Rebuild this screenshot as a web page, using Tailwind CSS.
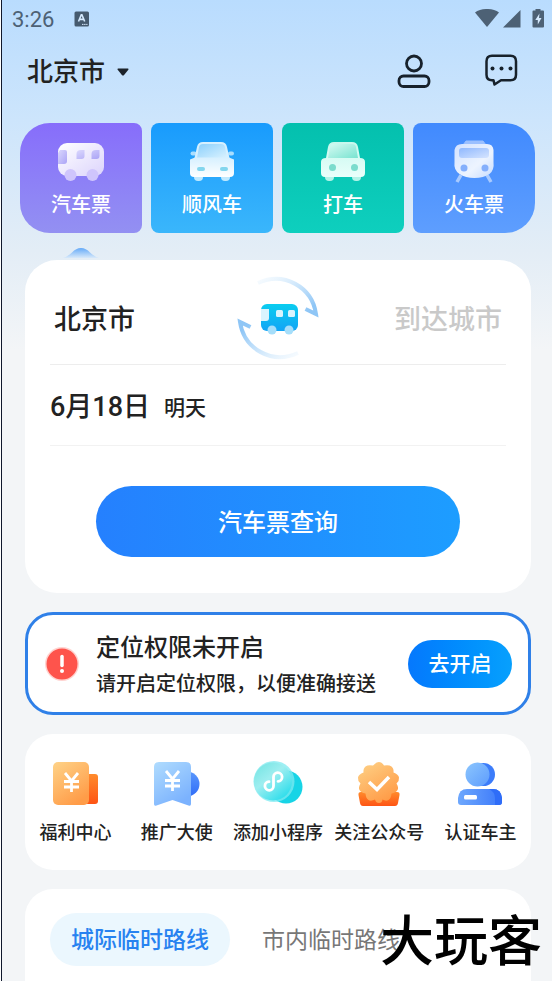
<!DOCTYPE html>
<html lang="zh-CN">
<head>
  <meta charset="UTF-8">
  <meta name="viewport" content="width=device-width, initial-scale=1.0">
  <title>汽车票查询</title>
  <script src="https://cdn.jsdelivr.net/npm/@tailwindcss/browser@4"></script>
</head>
<body class="h-screen overflow-hidden bg-white pl-px font-['Roboto','Noto_Sans_CJK_SC',sans-serif] font-medium text-[#222]">
  <div class="flex min-h-screen flex-col border-l border-[#10182c] bg-[#f3f4f7] bg-[linear-gradient(180deg,#b9dcfe_0px,#cde5fc_120px,#e3edf6_250px,#f3f5f7_350px)] bg-no-repeat">

    <!-- Status bar -->
    <div class="flex h-[38px] items-center justify-between pl-[10px] pr-2 text-[#4d6175]">
      <div class="flex items-center gap-5">
        <span class="text-[22px] font-normal">3:26</span>
        <svg class="h-4 w-4" viewBox="0 0 16 16">
          <rect x="0.5" y="0.5" width="14.500" height="15" rx="1.500" fill="#465a6e"/>
          <path d="M4.500 10.500 7.300 3.700h.6l2.800 6.800M5.500 8.400h4.200" fill="none" stroke="#d5e9fd" stroke-width="1.600"/>
          <path d="M8 13.400h5.500" stroke="#d5e9fd" stroke-width="1" stroke-dasharray="1.500 .6"/>
        </svg>
      </div>
      <svg class="h-5 w-[69px]" viewBox="0 0 69 20" fill="#4d6175">
        <path d="M0 3.500C6-1.200 18-1.200 24 3.500L12 18Z"/>
        <path d="M28 18.500 45.500 1v17.500Z"/>
        <path d="M60.500 0h5v1.500h2.500q1 0 1 1v15q0 1-1 1h-9.500q-1 0-1-1v-15q0-1 1-1h2Z"/>
        <path d="M64.500 4.500 60.300 11h2.500v4.500L66.500 9h-2.500Z" fill="#d5e9fd"/>
      </svg>
    </div>

    <!-- Header -->
    <header class="flex h-[66px] items-center justify-between pl-[25px] pr-[34px]">
      <button class="flex items-center gap-3 pt-0.5 text-[26px] leading-9">
        北京市
        <svg class="h-2 w-3" viewBox="0 0 12 8"><path d="M1 .5h10q1 .3.3 1.300L6.900 7.200q-.9.8-1.800 0L.7 1.800Q0 .8 1 .5Z" fill="#1c232b"/></svg>
      </button>
      <div class="flex items-center gap-[53px]">
        <button aria-label="我的">
          <svg class="h-[34px] w-[34px]" viewBox="0 0 34 34" fill="none" stroke="#17212b" stroke-width="2.800">
            <circle cx="17" cy="9.500" r="7.500"/>
            <rect x="2" y="22" width="30" height="10.500" rx="4.500"/>
          </svg>
        </button>
        <button aria-label="消息">
          <svg class="h-[34px] w-[34px]" viewBox="0 0 34 34" fill="none" stroke="#17212b" stroke-width="2.500" stroke-linejoin="round">
            <path d="M8 1.800h18.500q5.500 0 5.500 5.500v13.500q0 5.500-5.500 5.500H17L10.500 30.500 9.500 26.300H8q-5.500 0-5.500-5.500V7.300q0-5.500 5.500-5.500Z"/>
            <g fill="#17212b" stroke="none"><circle cx="8.500" cy="14.500" r="2"/><circle cx="17.500" cy="14.500" r="2"/><circle cx="26.500" cy="14.500" r="2"/></g>
          </svg>
        </button>
      </div>
    </header>

    <!-- Ticket types -->
    <nav class="mt-[19px] grid grid-cols-4 gap-[9px] pl-[18px] pr-[17px] text-[20px] leading-8 text-white">
      <a href="#" class="flex h-[110px] flex-col items-center rounded-l-[30px] rounded-r-lg bg-linear-to-b from-[#876dfb] to-[#9390f2] pt-4">
        <svg class="h-[50px] w-[50px]" viewBox="0 0 50 50">
          <defs>
            <linearGradient id="busBody" x2="1" y2="1"><stop stop-color="#fff"/><stop offset="1" stop-color="#dcd4fc"/></linearGradient>
            <linearGradient id="busGlass" x2="1" y2="1"><stop stop-color="#dbd8fd"/><stop offset="1" stop-color="#aba4f6"/></linearGradient>
          </defs>
          <rect x="2" y="4" width="46" height="33" rx="9" fill="url(#busBody)"/>
          <path d="M4 11h5q2 0 2 2v9q0 3-3 3H2V14Z" fill="url(#busGlass)"/>
          <path d="M25 11h3.500v6q0 3-3 3h-5v-5q0-4 4.500-4ZM40 11h3.500v6q0 3-3 3h-5v-5q0-4 4.500-4Z" fill="url(#busGlass)"/>
          <circle cx="14.500" cy="36" r="6" fill="#cfc5fc"/><circle cx="36.500" cy="36" r="6" fill="#cfc5fc"/>
        </svg>
        汽车票
      </a>
      <a href="#" class="flex h-[110px] flex-col items-center rounded-lg bg-linear-to-b from-[#189bfd] to-[#3ab6fb] pt-4">
        <svg class="h-[50px] w-[50px]" viewBox="0 0 50 50">
          <defs>
            <linearGradient id="carBody" x2="0" y2="1"><stop stop-color="#d6f0ff"/><stop offset="1" stop-color="#fff"/></linearGradient>
            <linearGradient id="carGlass" x2="1" y2="1"><stop stop-color="#8cd0fc"/><stop offset="1" stop-color="#d9f2ff"/></linearGradient>
          </defs>
          <rect x="7" y="34" width="9" height="8" rx="4" fill="#bfe9fe"/><rect x="34" y="34" width="9" height="8" rx="4" fill="#bfe9fe"/>
          <rect x="3.500" y="12.500" width="6" height="4" rx="2" fill="#a9defe"/><rect x="41" y="12.500" width="6" height="4" rx="2" fill="#a9defe"/>
          <path d="M16 3h18q5 0 6 5l2.500 11h-35L10 8q1-5 6-5Z" fill="#d6f0ff"/>
          <path d="M16 5h18q3.500 0 4 3l2 11H10l2-11q.5-3 4-3Z" fill="url(#carGlass)"/>
          <path d="M8 18.500h34l5 2V34q0 4-4 4H7q-4 0-4-4V20.500Z" fill="url(#carBody)"/>
          <rect x="10" y="28" width="8" height="4" rx="2" fill="#83d6ee"/><rect x="33" y="28" width="8" height="4" rx="2" fill="#83d6ee"/>
        </svg>
        顺风车
      </a>
      <a href="#" class="flex h-[110px] flex-col items-center rounded-lg bg-linear-to-b from-[#04c0ae] to-[#0ecfbe] pt-4">
        <svg class="h-[50px] w-[50px]" viewBox="0 0 50 50">
          <defs>
            <linearGradient id="taxiBody" x2="0" y2="1"><stop stop-color="#c6f8ed"/><stop offset="1" stop-color="#e9fffb"/></linearGradient>
            <linearGradient id="taxiGlass" x2="1" y2="1"><stop stop-color="#d6fbf3"/><stop offset="1" stop-color="#78e3d0"/></linearGradient>
          </defs>
          <rect x="7" y="34" width="9" height="8" rx="4" fill="#b3f3e8"/><rect x="34" y="34" width="9" height="8" rx="4" fill="#b3f3e8"/>
          <path d="M16 3h18q5 0 6 5l2 11q5 0 5 4v11q0 4-4 4H7q-4 0-4-4V23q0-4 5-4L10 8q1-5 6-5Z" fill="url(#taxiBody)"/>
          <path d="M16 5h18q3.500 0 4 3l2 11H10l2-11q.5-3 4-3Z" fill="url(#taxiGlass)"/>
          <circle cx="14.500" cy="28.500" r="3.500" fill="#7bdccd"/><circle cx="36.500" cy="28.500" r="3.500" fill="#7bdccd"/>
        </svg>
        打车
      </a>
      <a href="#" class="flex h-[110px] flex-col items-center rounded-l-lg rounded-r-[30px] bg-linear-to-b from-[#418afe] to-[#5e9efe] pt-4">
        <svg class="h-[50px] w-[50px]" viewBox="0 0 50 50">
          <defs>
            <linearGradient id="trainBody" x2="1" y2="1"><stop stop-color="#d2e2ff"/><stop offset=".6" stop-color="#edf4ff"/><stop offset="1" stop-color="#c5dbff"/></linearGradient>
            <linearGradient id="trainGlass" x2="1" y2="1"><stop stop-color="#8fb8fe"/><stop offset="1" stop-color="#d5e4ff"/></linearGradient>
          </defs>
          <path d="m12 36-4 7M38 36l4 7" stroke="#a8caff" stroke-width="3.500"/>
          <path d="M17 2h17l3 4H14Z" fill="#9bc0ff" stroke="#9bc0ff" stroke-linejoin="round"/>
          <path d="M13 5h25q6 0 6.500 6v12q1 8-4 12-6 4-15 4t-15-4q-6-4-5-12V11q1-6 7.500-6Z" fill="url(#trainBody)"/>
          <rect x="10" y="9" width="30" height="10" rx="3" fill="url(#trainGlass)"/>
          <circle cx="15" cy="29" r="3.500" fill="#84affc"/><circle cx="36" cy="29" r="3.500" fill="#84affc"/>
        </svg>
        火车票
      </a>
    </nav>

    <!-- Selected type marker -->
    <div class="flex h-[27px] items-end pb-0.5 pl-[61px]">
      <svg class="h-2.5 w-9" viewBox="0 0 36 10">
        <defs><linearGradient id="marker" x2="0" y2="1"><stop stop-color="#65aaf8"/><stop offset="1" stop-color="#d8e9fa"/></linearGradient></defs>
        <path d="M0 10Q4 9 9 4.500 13 0 18 0T27 4.500Q32 9 36 10Z" fill="url(#marker)"/>
      </svg>
    </div>

    <main class="flex flex-1 flex-col gap-[19px] pl-[23px] pr-[21px]">
      <!-- Search card -->
      <section class="rounded-[32px] bg-white px-[25px] pb-9">
        <div class="grid h-[105px] grid-cols-[1fr_auto_1fr] items-center border-b border-[#ededed] px-1 pt-3 text-[27px]">
          <button class="pt-1 text-left">北京市</button>
          <button aria-label="交换城市">
            <svg class="h-21 w-21" viewBox="0 0 84 84">
              <defs>
                <linearGradient id="arcTop" x1="0" y1="0" x2="1" y2=".7"><stop stop-color="#d5ebfc" stop-opacity=".2"/><stop offset="1" stop-color="#8fc6f6"/></linearGradient>
                <linearGradient id="arcBottom" x1="1" y1="1" x2="0" y2=".3"><stop stop-color="#d5ebfc" stop-opacity=".2"/><stop offset="1" stop-color="#8fc6f6"/></linearGradient>
                <linearGradient id="miniBus" x2="0" y2="1"><stop stop-color="#0acdf0"/><stop offset="1" stop-color="#12a4f5"/></linearGradient>
              </defs>
              <path d="M22 7C48-5 76 11 80 38L69.500 33" fill="none" stroke="url(#arcTop)" stroke-width="4"/>
              <path d="M62 77C36 89 8 73 4 46L14.500 51" fill="none" stroke="url(#arcBottom)" stroke-width="4"/>
              <rect x="25" y="28" width="37" height="27" rx="6" fill="url(#miniBus)"/>
              <path d="M25 33h8v9q0 3-3 3h-5Z" fill="#d9f4fe"/>
              <rect x="40" y="34" width="7" height="7" rx="1.500" fill="#d9f4fe"/><rect x="52" y="34" width="7" height="7" rx="1.500" fill="#d9f4fe"/>
              <circle cx="36" cy="54" r="4.500" fill="#a6defa"/><circle cx="53" cy="54" r="4.500" fill="#a6defa"/>
            </svg>
          </button>
          <button class="pt-1 text-right text-[#c9c9c9]">到达城市</button>
        </div>
        <button class="flex h-[81px] w-full items-center gap-3.5 border-b border-[#f2f2f2] pt-1 text-[27px]">
          6月18日 <span class="pt-1 text-[21px]">明天</span>
        </button>
        <div class="px-[46px] pt-10">
          <button class="h-[71px] w-full rounded-full bg-linear-to-r from-[#2580fe] to-[#1d9dff] pt-0.5 text-[24px] text-white">汽车票查询</button>
        </div>
      </section>

      <!-- Location permission -->
      <section class="flex h-[103px] items-center rounded-[28px] border-3 border-[#2f80e8] bg-white pl-4 pr-4">
        <svg class="mr-4 h-9 w-9 shrink-0" viewBox="0 0 36 36">
          <circle cx="18" cy="18" r="17" fill="#ffd3d0"/><circle cx="18" cy="18" r="15.500" fill="#fe544c"/>
          <path d="M18 10.500v9" stroke="#fff" stroke-width="3.500" stroke-linecap="round"/><circle cx="18" cy="25" r="2" fill="#fff"/>
        </svg>
        <div class="flex-1 pt-1 whitespace-nowrap">
          <h2 class="text-[24px] leading-9">定位权限未开启</h2>
          <p class="text-[20px] leading-9">请开启定位权限，以便准确接送</p>
        </div>
        <button class="h-12 w-[104px] shrink-0 rounded-full bg-linear-to-r from-[#0678fd] to-[#08a0fd] pt-0.5 text-[21px] text-white">去开启</button>
      </section>

      <!-- Services -->
      <section class="grid h-[136px] grid-cols-5 rounded-[28px] bg-white pt-[25px] text-center text-[18px] leading-8 whitespace-nowrap">
        <a href="#" class="flex flex-col items-center gap-2">
          <svg class="h-[50px] w-[50px]" viewBox="0 0 50 50">
            <defs>
              <linearGradient id="gold" x2=".6" y2="1"><stop stop-color="#fed388"/><stop offset="1" stop-color="#ff9c48"/></linearGradient>
              <linearGradient id="orange" x2="0" y2="1"><stop stop-color="#ff8b2c"/><stop offset="1" stop-color="#fe5414"/></linearGradient>
            </defs>
            <rect x="27" y="15" width="20" height="30" rx="3" fill="url(#orange)"/>
            <rect x="2" y="3" width="36" height="43" rx="5" fill="url(#gold)"/>
            <path d="m14 14 6.500 8 6.500-8M20.500 22v11M13 22.500h15M13 28h15" fill="none" stroke="#fff" stroke-width="2.800"/>
          </svg>
          福利中心
        </a>
        <a href="#" class="flex flex-col items-center gap-2">
          <svg class="h-[50px] w-[50px]" viewBox="0 0 50 50">
            <defs>
              <linearGradient id="ribbon" x2=".6" y2="1"><stop stop-color="#b0dcfe"/><stop offset="1" stop-color="#7bb2fe"/></linearGradient>
              <linearGradient id="coin" x2="0" y2="1"><stop stop-color="#5a97fc"/><stop offset="1" stop-color="#2f6df8"/></linearGradient>
            </defs>
            <circle cx="35" cy="25" r="12.500" fill="url(#coin)"/>
            <path d="M7 3h27q5 0 5 5v37q0 2.500-2.500 1.500L20.500 41 4.500 46.500Q2 47.500 2 45V8q0-5 5-5Z" fill="url(#ribbon)"/>
            <path d="m14 12 6.500 8 6.500-8M20.500 20v12M13 21.500h15M13 27h15" fill="none" stroke="#fff" stroke-width="2.800"/>
          </svg>
          推广大使
        </a>
        <a href="#" class="flex flex-col items-center gap-2">
          <svg class="h-[50px] w-[50px]" viewBox="0 0 50 50">
            <defs>
              <linearGradient id="mint" x2=".8" y2="1"><stop stop-color="#6fe3e1"/><stop offset=".45" stop-color="#9eeef0"/><stop offset="1" stop-color="#25dceb"/></linearGradient>
            </defs>
            <circle cx="33" cy="28" r="16.500" fill="#17d4e6"/>
            <circle cx="21" cy="22.500" r="20.500" fill="#7eeaf0" opacity=".75"/>
            <circle cx="20" cy="22.500" r="19" fill="url(#mint)"/>
            <path d="M20.500 18.500v8.500a4.300 4.300 0 1 1-4.500-4.300M20.500 26v-8a4.300 4.300 0 1 1 4.500 4.300" fill="none" stroke="#fff" stroke-width="2.800" stroke-linecap="round"/>
          </svg>
          添加小程序
        </a>
        <a href="#" class="flex flex-col items-center gap-2">
          <svg class="h-[50px] w-[50px]" viewBox="0 0 50 50">
            <path d="M7 33h36q3 0 2.500 3l-1.500 8q-.5 3-3 3H9q-2.500 0-3-3l-1.500-8Q4 33 7 33Z" fill="url(#orange)"/>
            <path d="M25 3q3 0 5 3.500 5-1 7.500 1t2 6q5 2 5.500 5t-2.500 6q2.500 4 1 6.500t-6 3.500q-.5 5-3 6.500t-6-.5Q28 44 25 44t-4-3.500q-4 2-6.500.5t-3-6.500q-4.500-1-6-3.500t1-6.500Q3.500 21.500 4 18.500t5.500-5q-.5-4 2-6t7.500-1Q22 3 25 3Z" fill="url(#gold)"/>
            <path d="m15 23 8 7.500L35 18" fill="none" stroke="#fff" stroke-width="3.500"/>
          </svg>
          关注公众号
        </a>
        <a href="#" class="flex flex-col items-center gap-2">
          <svg class="h-[50px] w-[50px]" viewBox="0 0 50 50">
            <defs>
              <linearGradient id="head" x2="1" y2="1"><stop stop-color="#8cc6fe"/><stop offset="1" stop-color="#5d9cfd"/></linearGradient>
              <linearGradient id="body" x2="1" y2="0"><stop stop-color="#6ea8fd"/><stop offset="1" stop-color="#3b78fa"/></linearGradient>
            </defs>
            <circle cx="28.500" cy="15.500" r="11.500" fill="#3c7cfa"/>
            <circle cx="22.500" cy="15.500" r="12" fill="url(#head)"/>
            <path d="M12 30h26q8 0 9 9v4q0 3-3 3H6q-3 0-3-3v-4q1-9 9-9Z" fill="url(#body)"/>
            <path d="M34 30h4q8 0 9 9v4q0 3-3 3h-4V39q0-6-6-9Z" fill="#2f6df8"/>
            <rect x="9" y="36" width="13" height="4.500" rx="1.500" fill="#fff"/>
          </svg>
          认证车主
        </a>
      </section>

      <!-- Routes -->
      <section class="flex flex-1 items-start rounded-t-[28px] bg-white px-[25px] pt-6 text-[23px] whitespace-nowrap">
        <button class="h-[53px] rounded-full bg-[#ebf7fe] px-[21px] pt-1 text-[#2782f0]">城际临时路线</button>
        <button class="h-[53px] px-8 pt-1 font-normal text-[#777]">市内临时路线</button>
      </section>
    </main>
  </div>

  <!-- Watermark -->
  <p class="pointer-events-none fixed right-2.5 bottom-2 text-[54px] leading-[60px] font-medium text-black">大玩客</p>
</body>
</html>
